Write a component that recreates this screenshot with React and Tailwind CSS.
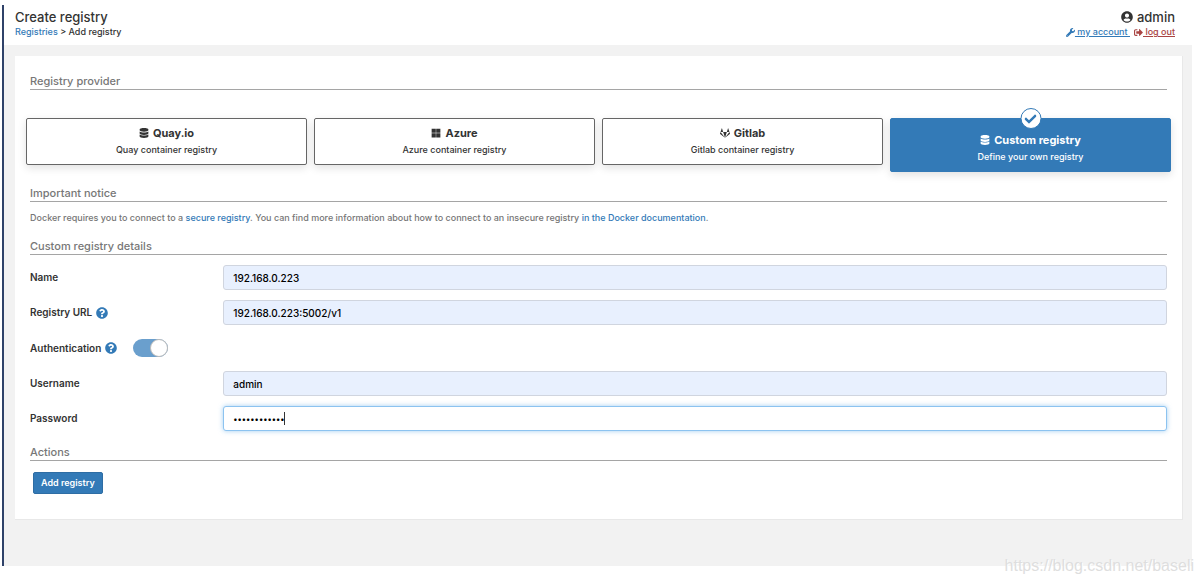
import { useState } from 'react';
import {
  FaCheck, FaDatabase, FaGitlab, FaMicrosoft, FaQuestionCircle,
  FaSignOutAlt, FaUserCircle, FaWrench
} from 'react-icons/fa';

const providers = [
  { id: 'quay', name: 'Quay.io', description: 'Quay container registry', icon: FaDatabase },
  { id: 'azure', name: 'Azure', description: 'Azure container registry', icon: FaMicrosoft },
  { id: 'gitlab', name: 'Gitlab', description: 'Gitlab container registry', icon: FaGitlab },
  { id: 'custom', name: 'Custom registry', description: 'Define your own registry', icon: FaDatabase }
];

const inputClass = 'block h-[25px] w-full rounded-[3px] border px-[9px] font-medium text-black outline-none';
const filledClass = 'border-[#d0d5df] bg-[#e8f0fe] text-[10px]';
const focusedClass = 'border-[#8cc3f0] bg-white text-[8px] shadow-[0_0_5px_rgba(102,175,233,0.6)]';

function SectionTitle({ children }) {
  return (
    <h2 className="h-[17px] border-b border-[#a5a5a5] text-[11px] leading-4 font-medium text-[#777]">
      {children}
    </h2>
  );
}

function ProviderCard({ provider, selected, onSelect }) {
  const Icon = provider.icon;
  return (
    <button
      type="button"
      aria-pressed={selected}
      onClick={onSelect}
      className={`relative flex flex-1 flex-col items-center rounded-[2px] border shadow-[0_3px_8px_rgba(0,0,0,0.12)] ${
        selected
          ? 'h-[54px] border-[#337ab7] bg-[#337ab7] pt-[13px] text-white'
          : 'h-[47px] border-[#666] bg-white pt-[6px] text-[#333]'
      }`}
    >
      {selected && (
        <span className="absolute -top-[11px] left-1/2 flex h-[21px] w-[21px] -translate-x-1/2 items-center justify-center rounded-full border border-[#337ab7] bg-white text-[#337ab7]">
          <FaCheck className="h-3 w-3" />
        </span>
      )}
      <span className="flex items-center gap-1 text-[11px] leading-4 font-bold">
        <Icon className="h-[10px] w-[10px]" />
        {provider.name}
      </span>
      <span className="mt-px text-[9px] leading-4 font-medium">{provider.description}</span>
    </button>
  );
}

function FormRow({ id, label, help, children }) {
  return (
    <div className="flex h-[25px] items-center">
      <div className="flex w-[17%] shrink-0 items-center gap-1">
        <label htmlFor={id} className="text-[10px] font-semibold text-[#333]">{label}</label>
        {help && <FaQuestionCircle className="h-3 w-3 text-[#337ab7]" />}
      </div>
      <div className="relative flex-1">{children}</div>
    </div>
  );
}

export default function App() {
  const [provider, setProvider] = useState('custom');
  const [auth, setAuth] = useState(true);

  return (
    <div className="relative bg-white pt-[5px] pr-[10px] pb-[18px] pl-[2px] font-['Inter',sans-serif] text-[#333]">
      <div className="border-l-2 border-[#2f4269] bg-[#f2f2f2] pb-[46px]">
        {/* Header */}
        <header className="flex h-10 justify-between bg-white pt-1 pr-[17px] pl-[11px]">
          <div>
            <h1 className="text-[13px] leading-4 font-medium">Create registry</h1>
            <p className="text-[9px] leading-[14px] font-medium">
              <a href="#registries" className="text-[#337ab7]">Registries</a> &gt; Add registry
            </p>
          </div>
          <div className="flex flex-col items-end">
            <div className="flex items-center gap-1 text-[13px] leading-4 font-medium">
              <FaUserCircle className="h-3 w-3" />
              admin
            </div>
            <div className="flex gap-1 text-[9px] leading-[14px] font-medium">
              <a href="#account" className="flex items-center text-[#337ab7]">
                <FaWrench className="h-[9px] w-[9px]" />
                <span className="whitespace-pre underline"> my account </span>
              </a>
              <a href="#logout" className="flex items-center text-[#a94442]">
                <FaSignOutAlt className="h-[9px] w-[9px]" />
                <span className="whitespace-pre underline"> log out</span>
              </a>
            </div>
          </div>
        </header>

        <main className="mt-[11px] mr-[9px] ml-[11px] border-r border-b border-[#e8e8e8] bg-white px-[15px] pt-[17px] pb-[25px]">
          <form onSubmit={(e) => e.preventDefault()}>
            <SectionTitle>Registry provider</SectionTitle>
            <div className="-mx-1 mt-7 flex h-[54px] items-start gap-[7px]">
              {providers.map((p) => (
                <ProviderCard
                  key={p.id}
                  provider={p}
                  selected={provider === p.id}
                  onSelect={() => setProvider(p.id)}
                />
              ))}
            </div>

            <div className="mt-[13px]">
              <SectionTitle>Important notice</SectionTitle>
            </div>
            <p className="mt-2 text-[9px] leading-4 font-medium text-[#767676]">
              Docker requires you to connect to a <a href="#secure" className="text-[#337ab7]">secure registry</a>.
              You can find more information about how to connect to an insecure registry{' '}
              <a href="#docs" className="text-[#337ab7]">in the Docker documentation</a>.
            </p>

            <div className="mt-3">
              <SectionTitle>Custom registry details</SectionTitle>
            </div>
            <div className="mt-[10px] flex flex-col gap-[10px]">
              <FormRow id="name" label="Name">
                <input id="name" type="text" defaultValue="192.168.0.223" className={`${inputClass} ${filledClass}`} />
              </FormRow>
              <FormRow id="url" label="Registry URL" help>
                <input id="url" type="text" defaultValue="192.168.0.223:5002/v1" className={`${inputClass} ${filledClass}`} />
              </FormRow>
              <div className="flex h-[26px] items-center">
                <label htmlFor="auth" className="text-[10px] font-semibold">Authentication</label>
                <FaQuestionCircle className="ml-1 h-3 w-3 text-[#337ab7]" />
                <input
                  id="auth"
                  type="checkbox"
                  role="switch"
                  checked={auth}
                  onChange={(e) => setAuth(e.target.checked)}
                  className="ml-4 flex h-[18px] w-[35px] appearance-none rounded-full bg-[#bbb] before:h-[18px] before:w-[18px] before:rounded-full before:border before:border-[#bbb] before:bg-white checked:justify-end checked:bg-[#6a9fcd]"
                />
              </div>
              {auth && (
                <>
                  <FormRow id="username" label="Username">
                    <input id="username" type="text" defaultValue="admin" className={`${inputClass} ${filledClass}`} />
                  </FormRow>
                  <FormRow id="password" label="Password">
                    <input id="password" type="password" defaultValue="registrypass" className={`${inputClass} ${focusedClass}`} />
                    <span className="absolute top-[6px] left-[61px] h-[13px] w-px bg-[#333]" />
                  </FormRow>
                </>
              )}
            </div>

            <div className="mt-[13px]">
              <SectionTitle>Actions</SectionTitle>
            </div>
            <button
              type="submit"
              className="mt-[11px] ml-[3px] flex h-[22px] items-center rounded-[2px] border border-[#2e6da4] bg-[#337ab7] px-[7px] text-[9px] font-semibold text-white"
            >
              Add registry
            </button>
          </form>
        </main>
      </div>

      <span className="absolute right-2 bottom-[9px] font-['Liberation_Sans',sans-serif] text-[16px] leading-[18px] text-[#dedede] [text-shadow:1px_1px_0_#fff]">
        https://blog.csdn.net/baseli
      </span>
    </div>
  );
}
